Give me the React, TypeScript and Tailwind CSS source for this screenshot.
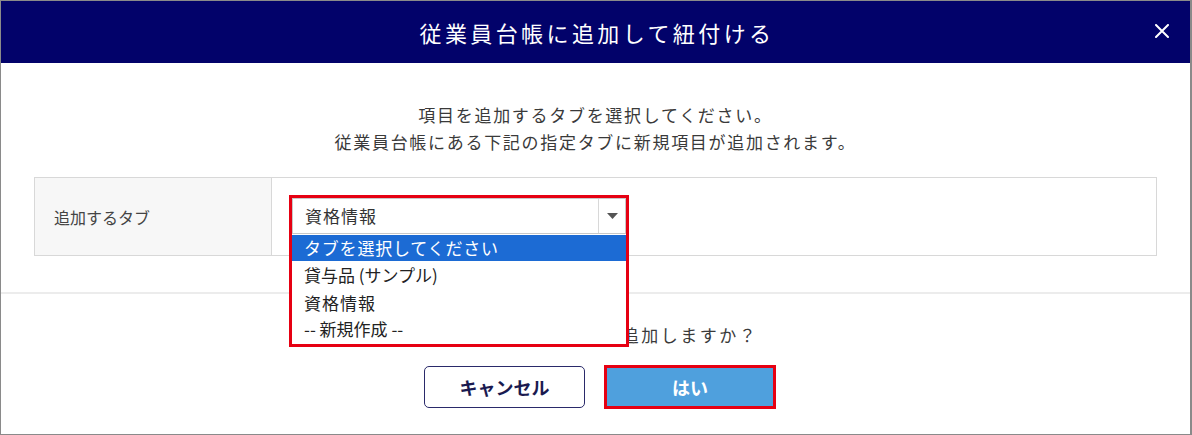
import React from "react";

const font = { fontFamily: '"Noto Sans CJK JP", "Noto Sans", sans-serif' };

export default function App() {
  return (
    <div
      className="w-[1192px] h-[435px] bg-white border border-[#8a8a8a] border-r-2 overflow-hidden flex flex-col"
      style={font}
    >
      {/* Header */}
      <div className="relative h-[62px] bg-[#02026a] flex items-center justify-center shrink-0">
        <span className="text-white text-[22px] leading-none tracking-[3.4px] pl-[3px]">従業員台帳に追加して紐付ける</span>
        <svg className="absolute right-[21px] top-[23px]" width="14" height="14" viewBox="0 0 14 14">
          <path d="M1 1 L13 13 M13 1 L1 13" stroke="white" strokeWidth="2" strokeLinecap="round" />
        </svg>
      </div>

      {/* Body */}
      <div className="flex flex-col items-center pt-[38px] text-[#3a3a3a] text-[17px] leading-[27px] tracking-[1.7px]">
        <p>項目を追加するタブを選択してください。</p>
        <p>従業員台帳にある下記の指定タブに新規項目が追加されます。</p>
      </div>

      {/* Table */}
      <div className="mx-[33px] mt-[22px] flex border border-[#d8d8d8] h-[79px] shrink-0">
        <div className="w-[237px] bg-[#f7f7f7] border-r border-[#d8d8d8] flex items-center pl-[19px] text-[16px] text-[#444]">
          追加するタブ
        </div>
        <div className="flex-1 pl-[20px] pt-[20px]">
          <div className="relative w-[334px] h-[36px]">
            <div className="w-full h-full flex items-center border border-[#c8c8c8] bg-white">
              <span className="flex-1 pl-[12px] text-[17px] text-[#333] tracking-[1px]">資格情報</span>
              <div className="w-[27px] h-full border-l border-[#d8d8d8] flex items-center justify-center">
                <svg width="11" height="6" viewBox="0 0 11 6">
                  <path d="M0 0 L11 0 L5.5 6 Z" fill="#555" />
                </svg>
              </div>
            </div>
            {/* dropdown list */}
            <div className="absolute left-0 top-[37px] w-full bg-white flex flex-col text-[17px] text-[#222] z-10">
              <div className="h-[26px] bg-[#1c6bd4] text-white pl-[12px] leading-[26px] tracking-[0.8px]">タブを選択してください</div>
              <div className="h-[28px] leading-[28px] pl-[12px]">貸与品&nbsp;(サンプル)</div>
              <div className="h-[27px] leading-[27px] pl-[12px] tracking-[1px]">資格情報</div>
              <div className="h-[28px] leading-[26px] pl-[12px]">-- 新規作成 --</div>
            </div>
            {/* red annotation frame */}
            <div className="absolute -left-[3px] -top-[3px] w-[340px] h-[152px] border-[3px] border-[#e60012] z-20 pointer-events-none" />
          </div>
        </div>
      </div>

      {/* Separator */}
      <div className="mt-[36px] h-[2px] bg-[#ececec] shrink-0" />

      {/* Confirm */}
      <div className="flex justify-center pt-[27px] pr-[6px] text-[17px] leading-[27px] text-[#3a3a3a] tracking-[2.5px]">
        <p>選択したタブに項目を追加しますか？</p>
      </div>

      <div className="flex justify-center items-center gap-[19px] mt-[17px] pl-[9px]">
        <button className="w-[161px] h-[42px] border border-[#2a2a6a] rounded-[5px] bg-white text-[#1a1a50] text-[18px] font-bold">
          キャンセル
        </button>
        <div className="border-[3px] border-[#e60012] p-0">
          <button className="w-[166px] h-[38px] bg-[#4fa0dd] text-white text-[18px] font-bold block">
            はい
          </button>
        </div>
      </div>
    </div>
  );
}
